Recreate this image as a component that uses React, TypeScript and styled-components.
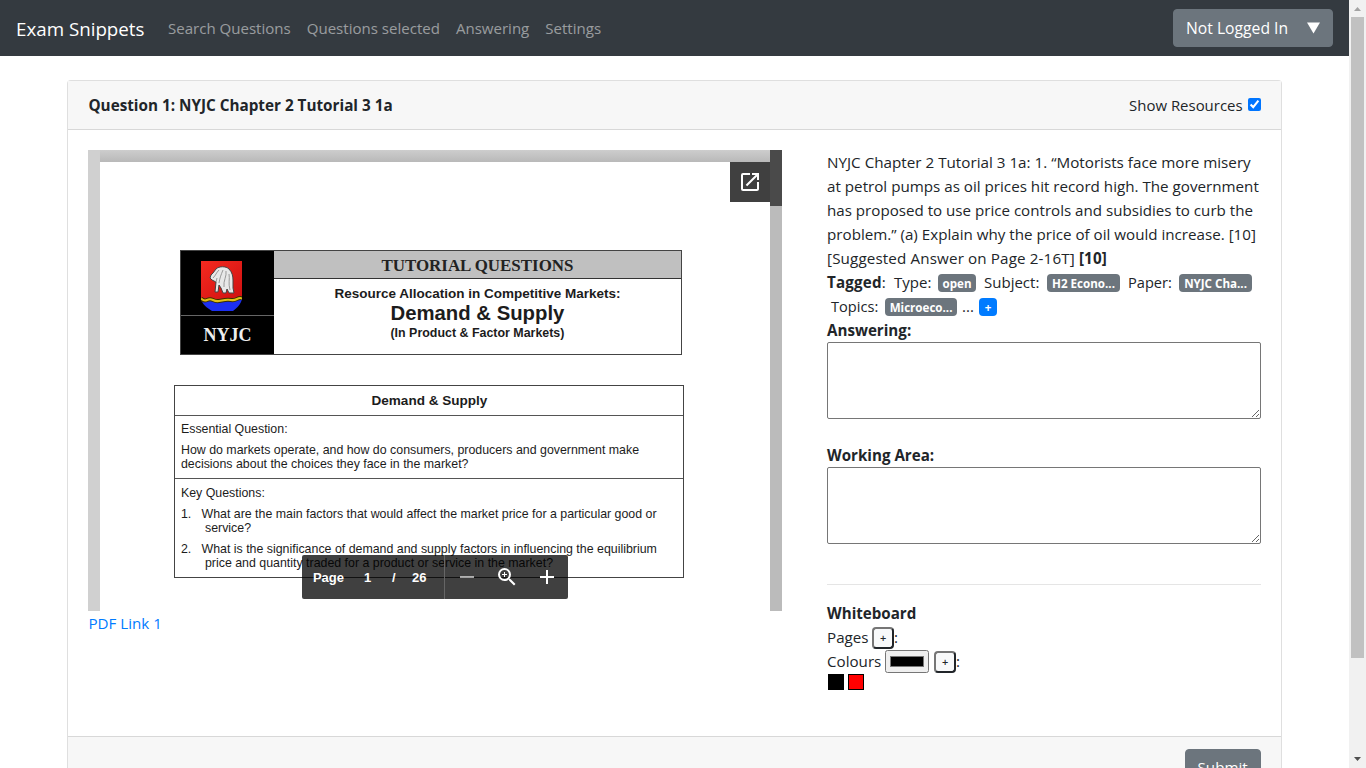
import React from "react";
import styled, { createGlobalStyle } from "styled-components";
import { MdAdd, MdOpenInNew, MdRemove, MdZoomIn } from "react-icons/md";

const Global = createGlobalStyle`
  *, *::before, *::after { box-sizing: border-box; }
  html, body { margin: 0; height: 100%; overflow: hidden; background: #fff; }
  body {
    font-family: "Open Sans", "Noto Sans", sans-serif;
    font-size: 15.15px;
    line-height: 24px;
    color: #212529;
  }
`;

const Screen = styled.div`
  display: flex;
  height: 100vh;
  overflow: hidden;
`;

const Main = styled.main`
  flex: 1;
  min-width: 0;
  height: 100vh;
  overflow: hidden;
`;

/* Top bar */
const Navbar = styled.nav`
  display: flex;
  align-items: center;
  height: 56px;
  padding: 0 16px;
  background: #343a40;
`;

const Brand = styled.a`
  width: 152px;
  font-size: 18.75px;
  line-height: 30px;
  padding-top: 1px;
  color: #fff;
  white-space: nowrap;
`;

const NavLinks = styled.div`
  display: flex;
  flex: 1;
  gap: 16px;
  font-size: 15.05px;
  padding-bottom: 1px;
  color: rgba(255, 255, 255, 0.5);
  white-space: nowrap;
`;

const Button = styled.button`
  display: flex;
  align-items: center;
  justify-content: space-between;
  height: 38px;
  padding: 0 12px;
  border: 1px solid #6c757d;
  border-radius: 4px;
  background: #6c757d;
  color: #fff;
  font: inherit;
  white-space: nowrap;
`;

const AccountButton = styled(Button)`
  width: 160px;
  font-size: 15.7px;
`;

const SubmitButton = styled(Button)`
  width: 76px;
  padding-bottom: 2px;
`;

/* Question card */
const Card = styled.section`
  width: 90%;
  height: 730px;
  margin: 24px auto 0;
  border: 1px solid rgba(0, 0, 0, 0.125);
  border-radius: 4px;
  background: #fff;
`;

const CardHeader = styled.header`
  display: flex;
  align-items: center;
  justify-content: space-between;
  height: 49px;
  padding: 0 20px 1px;
  background: #f7f7f7;
  border-bottom: 1px solid rgba(0, 0, 0, 0.125);
`;

const Title = styled.strong`
  font-size: 15.28px;
`;

const ResourceToggle = styled.label`
  display: flex;
  align-items: center;
  gap: 5px;
  font-size: 14.95px;
`;

const Checkbox = styled.input`
  width: 13px;
  height: 13px;
  margin: 0 0 1px;
`;

const CardBody = styled.div`
  display: flex;
  justify-content: space-between;
  height: 606px;
  padding: 20px;
`;

const CardFooter = styled.footer`
  display: flex;
  justify-content: flex-end;
  height: 63px;
  padding: 12px 20px;
  background: #f7f7f7;
  border-top: 1px solid rgba(0, 0, 0, 0.125);
`;

/* PDF viewer */
const ResourceColumn = styled.div`
  width: 694px;
`;

const PdfLink = styled.a`
  display: block;
  color: #007bff;
`;

const Viewer = styled.div`
  position: relative;
  display: flex;
  height: 461px;
  overflow: hidden;
  background: #d0d0d0;
  font-family: "Liberation Sans", Arial, sans-serif;
`;

const PageArea = styled.div`
  flex: 1;
  padding-left: 12px;
`;

const PageShadow = styled.div`
  height: 12px;
  background: linear-gradient(#cdcdcd, #b9b9b9);
`;

const PdfPage = styled.div`
  height: 449px;
  padding: 88px 86px 0 74px;
  background: #fff;
  color: #1c1c1c;
`;

const ViewerTrack = styled.div`
  width: 12px;
  background: #bbb;
`;

const ViewerThumb = styled.div`
  height: 56px;
  background: #4a4a4a;
`;

const PopOut = styled.div`
  position: absolute;
  top: 12px;
  right: 12px;
  display: flex;
  align-items: center;
  justify-content: center;
  width: 40px;
  height: 40px;
  background: #404040;
  color: #fff;
`;

const Masthead = styled.div`
  display: flex;
  width: 502px;
  height: 105px;
  margin-left: 6px;
  border: 1px solid #444;
`;

const Emblem = styled.div`
  display: flex;
  flex-direction: column;
  align-items: center;
  width: 93px;
  background: #000;
`;

const EmblemArt = styled.div`
  width: 100%;
  height: 65px;
  padding: 10px 0 0 20px;
  border-bottom: 1px solid #666;
`;

const EmblemName = styled.div`
  height: 38px;
  padding-right: 1px;
  font: 700 18px/38px "Liberation Serif", "Times New Roman", serif;
  color: #eee;
`;

const MastheadText = styled.div`
  flex: 1;
  display: flex;
  flex-direction: column;
  text-align: center;
  font-weight: 700;
  white-space: nowrap;
`;

const Band = styled.div`
  height: 28px;
  margin-bottom: 7px;
  padding: 1px 1px 0 0;
  background: #c0c0c0;
  border-bottom: 1px solid #333;
  font: 700 16.93px/28px "Liberation Serif", "Times New Roman", serif;
  color: #222;
`;

const MastheadLine = styled.div<{ $size: number; $height: number }>`
  font-size: ${(p) => p.$size}px;
  line-height: ${(p) => p.$height}px;
  padding-right: 1px;
`;

const Sheet = styled.div`
  height: 193px;
  margin-top: 30px;
  border: 1px solid #444;
  font-size: 12.38px;
  line-height: 14.3px;
  white-space: nowrap;
`;

const SheetCell = styled.div<{ $height: number; $top?: number }>`
  height: ${(p) => p.$height}px;
  padding: ${(p) => p.$top ?? 6}px 0 0 5.5px;
  border-bottom: 1px solid #555;
  &:last-child { border-bottom: 0; }
`;

const SheetTitle = styled(SheetCell)`
  padding: 0;
  font-size: 13.56px;
  font-weight: 700;
  line-height: 29px;
  text-align: center;
`;

const Paragraph = styled.div`
  margin-bottom: 6.8px;
`;

const NumberedItem = styled.div`
  display: flex;
  margin-bottom: 6.6px;
`;

const ItemNumber = styled.span`
  width: 20.5px;
`;

const Continuation = styled.div`
  padding-left: 3.5px;
`;

const ViewerToolbar = styled.div`
  position: absolute;
  left: 213.5px;
  top: 405px;
  display: flex;
  align-items: center;
  width: 266px;
  height: 44px;
  border-radius: 2px;
  background: rgba(0, 0, 0, 0.75);
  color: #fff;
  font-size: 13px;
  font-weight: 700;
`;

const PageStatus = styled.div`
  display: flex;
  align-items: center;
  width: 143px;
  height: 44px;
  margin-right: 2px;
  padding: 1px 0 0 11px;
  border-right: 1px solid #666;
`;

const StatusText = styled.span<{ $width: number }>`
  width: ${(p) => p.$width}px;
`;

const ToolIcon = styled.span<{ $dim?: boolean }>`
  display: flex;
  justify-content: center;
  width: 40px;
  opacity: ${(p) => (p.$dim ? 0.6 : 1)};
`;

/* Question column */
const AnswerColumn = styled.div`
  width: 433.5px;
`;

const Line = styled.div<{ $size?: number; $spacing?: number }>`
  height: 24px;
  font-size: ${(p) => p.$size ?? 15.15}px;
  letter-spacing: ${(p) => p.$spacing ?? 0}px;
  white-space: nowrap;
`;

const TagRow = styled.div<{ $indent?: number }>`
  display: flex;
  align-items: center;
  height: 24px;
  padding-left: ${(p) => p.$indent ?? 0}px;
  white-space: nowrap;
`;

const TagLabel = styled.span<{ $width: number; $size?: number; $spacing?: number }>`
  width: ${(p) => p.$width}px;
  font-size: ${(p) => p.$size ?? 15}px;
  letter-spacing: ${(p) => p.$spacing ?? 0}px;
`;

const Badge = styled.span<{ $width: number; $primary?: boolean; $gap?: number }>`
  width: ${(p) => p.$width}px;
  height: 18px;
  margin: 2px ${(p) => p.$gap ?? 8}px 0 0;
  border-radius: 4px;
  background: ${(p) => (p.$primary ? "#007bff" : "#6c757d")};
  color: #fff;
  font-size: 11.6px;
  font-weight: 700;
  line-height: 19px;
  text-align: center;
`;

const Label = styled.strong<{ $top?: number }>`
  display: block;
  height: 24px;
  margin-top: ${(p) => p.$top ?? 0}px;
`;

const TextBox = styled.textarea`
  display: block;
  width: 100%;
  height: 77px;
  margin: 0;
  border: 1px solid #767676;
  border-radius: 2px;
`;

const Rule = styled.hr`
  width: 100%;
  height: 1px;
  margin: 40px 0 16px;
  border: 0;
  background: rgba(0, 0, 0, 0.1);
`;

const ToolRow = styled.div`
  display: flex;
  align-items: center;
  height: 24px;
`;

const ToolLabel = styled.span<{ $width: number }>`
  width: ${(p) => p.$width}px;
`;

const PlusButton = styled.button`
  width: 22px;
  height: 22px;
  margin-top: 1px;
  padding: 0;
  border: 2px solid;
  border-color: #767676 #212529 #212529 #767676;
  border-radius: 4px;
  background: #f8f9fa;
  color: #212529;
  font: 600 11px/18px "Open Sans", sans-serif;
`;

const ColourInput = styled.input`
  width: 44px;
  height: 23px;
  margin: 0 5px 0 0;
  padding: 1px 2px;
`;

const Swatches = styled.div`
  display: flex;
  gap: 4px;
  padding: 1px 0 0 1px;
`;

const Swatch = styled.span<{ $colour: string }>`
  width: 16px;
  height: 16px;
  border: 1px solid #000;
  background: ${(p) => p.$colour};
`;

/* Window scrollbar */
const Scrollbar = styled.aside`
  display: flex;
  flex-direction: column;
  align-items: center;
  justify-content: space-between;
  width: 17px;
  background: #f1f1f1;
`;

const ScrollThumb = styled.div`
  width: 13px;
  height: 641px;
  margin-bottom: auto;
  background: #c1c1c1;
`;

const Arrow = styled.svg`
  display: block;
  width: 17px;
  height: 17px;
`;

const Shield = () => (
  <svg width="41" height="50" viewBox="0 0 41 50">
    <defs>
      <linearGradient id="red" x1="0" y1="0" x2="1" y2="1">
        <stop offset="0" stopColor="#f52a20" />
        <stop offset="1" stopColor="#d01010" />
      </linearGradient>
    </defs>
    <path d="M0 0H41V38H0Z" fill="url(#red)" />
    <path d="M0 38H41C40 43 36 47 32 50H11C6 47 1 43 0 38Z" fill="#1c2ff0" />
    <path d="M0 37.500q3 3 6 1.500t6 0 6 1 6-1 6 0 6-1 5-0.500" fill="none" stroke="#3a3000" strokeWidth="4" />
    <path d="M0 37.500q3 3 6 1.500t6 0 6 1 6-1 6 0 6-1 5-0.500" fill="none" stroke="#e0c014" strokeWidth="2" />
    <path d="M15 8C18 5 25 5 28 8C31 11 32 15 32 19V27L33 32H28L26 28L25 32H22L20 27L18 24L17 31H14L15 21L11 19L9 17L10 14L12 12Z" fill="#e8e8e8" stroke="#444" strokeWidth="1" strokeLinejoin="round" />
    <path d="M18 9C15 12 15 14 12 17M22 9C20 14 19 16 18 22M25 10C26 15 22 20 23 26M28 13C29 18 27 22 29 29M16 17L15 21" fill="none" stroke="#999" strokeWidth="1" />
  </svg>
);

export default function App() {
  return (
    <Screen>
      <Global />
      <Main>
        <Navbar>
          <Brand>Exam Snippets</Brand>
          <NavLinks>
            <span>Search Questions</span>
            <span>Questions selected</span>
            <span>Answering</span>
            <span>Settings</span>
          </NavLinks>
          <AccountButton>
            <span>Not Logged In</span>
            <svg width="13" height="12" viewBox="0 0 13 12">
              <path d="M0 0.500H13L6.500 11.500Z" fill="#fff" />
            </svg>
          </AccountButton>
        </Navbar>

        <Card>
          <CardHeader>
            <Title>Question 1: NYJC Chapter 2 Tutorial 3 1a</Title>
            <ResourceToggle>
              Show Resources
              <Checkbox type="checkbox" defaultChecked />
            </ResourceToggle>
          </CardHeader>

          <CardBody>
            <ResourceColumn>
              <Viewer>
                <PageArea>
                  <PageShadow />
                  <PdfPage>
                    <Masthead>
                      <Emblem>
                        <EmblemArt>
                          <Shield />
                        </EmblemArt>
                        <EmblemName>NYJC</EmblemName>
                      </Emblem>
                      <MastheadText>
                        <Band>TUTORIAL QUESTIONS</Band>
                        <MastheadLine $size={13.5} $height={16}>
                          Resource Allocation in Competitive Markets:
                        </MastheadLine>
                        <MastheadLine $size={20.34} $height={23}>
                          Demand &amp; Supply
                        </MastheadLine>
                        <MastheadLine $size={12.43} $height={16}>
                          (In Product &amp; Factor Markets)
                        </MastheadLine>
                      </MastheadText>
                    </Masthead>

                    <Sheet>
                      <SheetTitle $height={30}>Demand &amp; Supply</SheetTitle>
                      <SheetCell $height={63}>
                        <Paragraph>Essential Question:</Paragraph>
                        <Paragraph>
                          How do markets operate, and how do consumers, producers and government make
                          <br />
                          decisions about the choices they face in the market?
                        </Paragraph>
                      </SheetCell>
                      <SheetCell $height={98} $top={6.8}>
                        <Paragraph>Key Questions:</Paragraph>
                        <NumberedItem>
                          <ItemNumber>1.</ItemNumber>
                          <div>
                            What are the main factors that would affect the market price for a particular good or
                            <Continuation>service?</Continuation>
                          </div>
                        </NumberedItem>
                        <NumberedItem>
                          <ItemNumber>2.</ItemNumber>
                          <div>
                            What is the significance of demand and supply factors in influencing the equilibrium
                            <Continuation>price and quantity traded for a product or service in the market?</Continuation>
                          </div>
                        </NumberedItem>
                      </SheetCell>
                    </Sheet>
                  </PdfPage>
                </PageArea>
                <ViewerTrack>
                  <ViewerThumb />
                </ViewerTrack>
                <PopOut>
                  <MdOpenInNew size={24} />
                </PopOut>
                <ViewerToolbar>
                  <PageStatus>
                    <StatusText $width={51}>Page</StatusText>
                    <StatusText $width={28}>1</StatusText>
                    <StatusText $width={20}>/</StatusText>
                    <StatusText $width={20}>26</StatusText>
                  </PageStatus>
                  <ToolIcon $dim>
                    <MdRemove size={24} />
                  </ToolIcon>
                  <ToolIcon>
                    <MdZoomIn size={24} />
                  </ToolIcon>
                  <ToolIcon>
                    <MdAdd size={24} />
                  </ToolIcon>
                </ViewerToolbar>
              </Viewer>
              <PdfLink>PDF Link 1</PdfLink>
            </ResourceColumn>

            <AnswerColumn>
              <Line $size={15.22}>NYJC Chapter 2 Tutorial 3 1a: 1. “Motorists face more misery</Line>
              <Line $size={15.18}>at petrol pumps as oil prices hit record high. The government</Line>
              <Line $size={15.14}>has proposed to use price controls and subsidies to curb the</Line>
              <Line $size={15.16}>problem.” (a) Explain why the price of oil would increase. [10]</Line>
              <Line $size={15.2} $spacing={0.13}>
                [Suggested Answer on Page 2-16T] <b>[10]</b>
              </Line>
              <TagRow>
                <TagLabel $width={67} $size={15.15} $spacing={0.2}>
                  <b>Tagged</b>:
                </TagLabel>
                <TagLabel $width={44}>Type:</TagLabel>
                <Badge $width={38}>open</Badge>
                <TagLabel $width={63}>Subject:</TagLabel>
                <Badge $width={73}>H2 Econo...</Badge>
                <TagLabel $width={51} $size={14.6}>
                  Paper:
                </TagLabel>
                <Badge $width={73} $gap={0}>
                  NYJC Cha...
                </Badge>
              </TagRow>
              <TagRow $indent={4}>
                <TagLabel $width={54} $size={14.6}>
                  Topics:
                </TagLabel>
                <Badge $width={72} $gap={5}>
                  Microeco...
                </Badge>
                <TagLabel $width={17}>...</TagLabel>
                <Badge $width={18} $primary>
                  +
                </Badge>
              </TagRow>
              <Label>Answering:</Label>
              <TextBox />
              <Label $top={24}>Working Area:</Label>
              <TextBox />
              <Rule />
              <Label>Whiteboard</Label>
              <ToolRow>
                <ToolLabel $width={45}>Pages</ToolLabel>
                <PlusButton>+</PlusButton>:
              </ToolRow>
              <ToolRow>
                <ToolLabel $width={58}>Colours</ToolLabel>
                <ColourInput type="color" defaultValue="#000000" />
                <PlusButton>+</PlusButton>:
              </ToolRow>
              <Swatches>
                <Swatch $colour="#000" />
                <Swatch $colour="#f00" />
              </Swatches>
            </AnswerColumn>
          </CardBody>

          <CardFooter>
            <SubmitButton>Submit</SubmitButton>
          </CardFooter>
        </Card>
      </Main>

      <Scrollbar>
        <Arrow viewBox="0 0 17 17">
          <path d="M5 11H12L8.500 7Z" fill="#a3a3a3" />
        </Arrow>
        <ScrollThumb />
        <Arrow viewBox="0 0 17 17">
          <path d="M5 6H12L8.500 10Z" fill="#505050" />
        </Arrow>
      </Scrollbar>
    </Screen>
  );
}
